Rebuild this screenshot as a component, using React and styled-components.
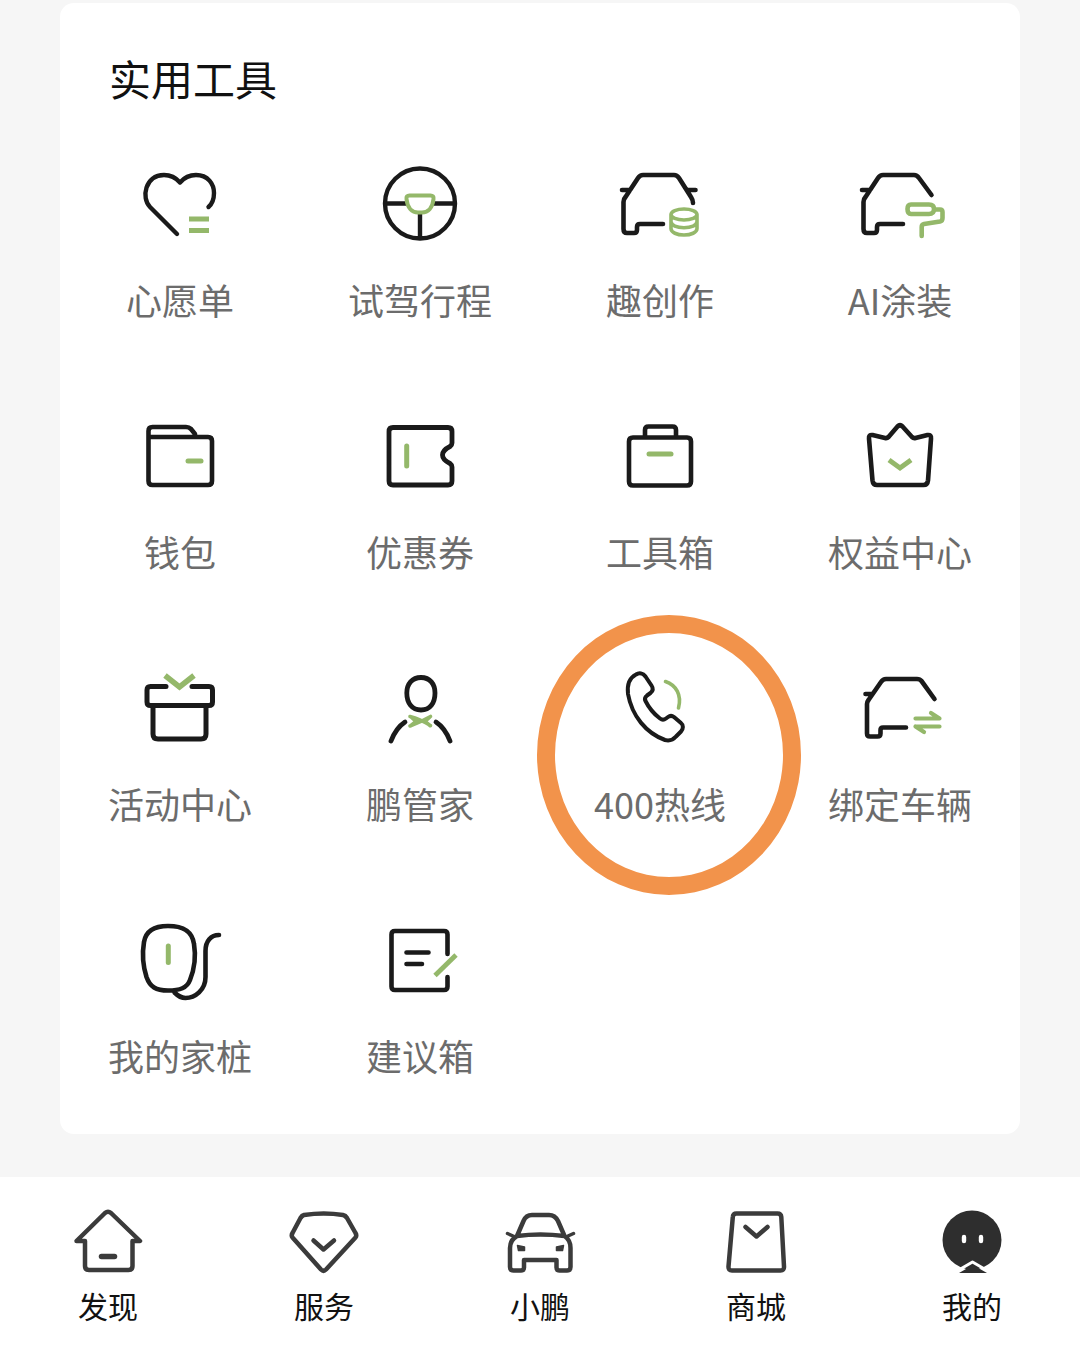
import React from "react";
import styled, { createGlobalStyle } from "styled-components";

const CJK = `"Noto Sans CJK SC", "Noto Sans", sans-serif`;

const GlobalStyle = createGlobalStyle`
  html, body {
    margin: 0;
    padding: 0;
    background: #f6f6f6;
    font-family: ${CJK};
  }
`;

const Page = styled.div`
  width: 1080px;
  height: 1363px;
  display: flex;
  flex-direction: column;
  overflow: hidden;
`;
const Card = styled.section`
  margin: 3px 60px 0;
  padding: 47px 0 52px;
  background: #fff;
  border-radius: 14px;
`;
const Title = styled.h2`
  margin: 0 0 48px 49px;
  font-size: 42px;
  line-height: 56px;
  font-weight: 400;
  color: #111;
`;
const ToolGrid = styled.div`
  display: grid;
  grid-template-columns: repeat(4, 240px);
  row-gap: 80px;
`;
const Tool = styled.div`
  position: relative;
  display: flex;
  flex-direction: column;
  align-items: center;
`;
const ToolLabel = styled.span`
  margin: 20px 0 2px;
  font-size: 36px;
  line-height: 50px;
  color: #6c6c6c;
  white-space: nowrap;
`;
const HighlightRing = styled.div`
  position: absolute;
  left: -3px;
  top: -43px;
  width: 264px;
  height: 280px;
  box-sizing: border-box;
  border: 18px solid #f2934b;
  border-radius: 50%;
`;
const TabBar = styled.nav`
  margin-top: 43px;
  flex: 1;
  padding-top: 23px;
  background: #fff;
  display: grid;
  grid-template-columns: repeat(5, 216px);
  align-content: start;
`;
const Tab = styled.div`
  display: flex;
  flex-direction: column;
  align-items: center;
`;
const TabLabel = styled.span`
  margin-top: 5px;
  font-size: 30px;
  line-height: 40px;
  color: #111;
`;
const ToolSvg = styled.svg.attrs({ viewBox: "0 0 100 100" })`
  display: block;
  width: 100px;
  height: 100px;
  fill: none;
  stroke-linecap: round;
  stroke-linejoin: round;
`;
const TabSvg = styled.svg.attrs({ viewBox: "0 0 80 80" })`
  display: block;
  width: 80px;
  height: 80px;
  fill: none;
  stroke: #3b3b3b;
  stroke-width: 4.5;
  stroke-linecap: round;
  stroke-linejoin: round;
`;
const Ink = styled.path`
  stroke: #1a1a1a;
  stroke-width: ${(p) => p.$w || 4.4};
`;
const Leaf = styled.path`
  stroke: #94b86a;
  stroke-width: ${(p) => p.$w || 5};
`;

const CAR_LEFT = "M53 70 H30 Q27 70 27 73 V76 Q27 79 24 79 H17 Q13.5 79 13.5 75 V48 Q13.5 45 15.5 43 L28 24 Q30 21 33 21 H64 Q67 21 69 24";

const toolIcons = {
  wish: (
    <ToolSvg>
      <Ink d="M47 80 L20 53 C11 44 15 21 34 21 C42 21 47 25 50 28.5 C53 25 58 21 66 21 C78 21 84 30 84 39 C84 45 82 50 78.5 53" />
      <Leaf d="M59 65 H79 M59 76.5 H79" style={{ strokeLinecap: "butt" }} />
    </ToolSvg>
  ),
  drive: (
    <ToolSvg>
      <Ink d="M15 49.5 A35 35 0 1 0 85 49.5 A35 35 0 1 0 15 49.5 M15 49.5 H36 M64 49.5 H85 M50 60 V84" />
      <Leaf $w={4} d="M39.5 41.5 H60.5 Q64 41.5 63.5 45 C62.5 54 58 58.5 52 58.5 H48 C42 58.5 37.5 54 36.5 45 Q36 41.5 39.5 41.5 Z" />
    </ToolSvg>
  ),
  create: (
    <ToolSvg>
      <Ink $w={4.6} d={`${CAR_LEFT} L81 43 Q83 46 83 49 M12 36 H20 M78 36 H85.5`} />
      <Leaf $w={3.6} d="M61 60.5 A13 5.5 0 1 0 87 60.5 A13 5.5 0 1 0 61 60.5 V74.5 C61 78.5 67 81 74 81 C81 81 87 78.5 87 74.5 V60.5 M61 67.5 C61 71.5 67 73.8 74 73.8 C81 73.8 87 71.5 87 67.5" />
    </ToolSvg>
  ),
  paint: (
    <ToolSvg>
      <Ink $w={4.6} d={`${CAR_LEFT} L81.5 41 M12 36 H20`} />
      <Leaf $w={4.6} d="M61 50.5 H79 Q84 50.5 84 55 Q84 60 79 60 H61 Q57.5 60 57.5 55 Q57.5 50.5 61 50.5 Z M84 55.5 H90 Q92.5 55.5 92.5 58 V64 Q92.5 67 90 67.5 L74 70 Q71.7 70.5 71.7 73 V82" />
    </ToolSvg>
  ),
  wallet: (
    <ToolSvg>
      <Ink $w={4.6} d="M18.5 31 H78 Q82 31 82 35 V75 Q82 79 78 79 H22.5 Q18.5 79 18.5 75 V25 Q18.5 21 22.5 21 H56 Q59 21 61 23 L65 28" />
      <Leaf d="M58 55 H71" />
    </ToolSvg>
  ),
  coupon: (
    <ToolSvg>
      <Ink $w={4.8} d="M23 21.5 H78 Q82 21.5 82 25.5 V37 Q82 39 80 40.5 C75 43 72.5 45.5 72.5 49 C72.5 52.5 75 55 80 57.5 Q82 59 82 61 V75 Q82 79 78 79 H23 Q19 79 19 75 V25.5 Q19 21.5 23 21.5 Z" />
      <Leaf d="M36.7 40 V60" />
    </ToolSvg>
  ),
  toolbox: (
    <ToolSvg>
      <Ink $w={4.6} d="M23 31.5 H77 Q81 31.5 81 35.5 V75.5 Q81 79.5 77 79.5 H23 Q19 79.5 19 75.5 V35.5 Q19 31.5 23 31.5 Z M35 31 V24 Q35 20.5 38.5 20.5 H62.5 Q66 20.5 66 24 V31" />
      <Leaf d="M39 48 H61" />
    </ToolSvg>
  ),
  rights: (
    <ToolSvg>
      <Ink $w={4.6} d="M47.5 20.5 Q50 18 52.5 20.5 L62 31 Q63.5 32.5 65.5 32 L77.5 29 Q81.5 28.5 81 32.5 L78 74.5 Q77.5 79 73.5 79 H27 Q23 79 22.5 74.5 L19 32.5 Q18.5 28.5 22.5 29 L35 32 Q37 32.5 38.5 31 Z" />
      <Leaf d="M39 54 L50 62 L61 54" style={{ strokeLinecap: "butt", strokeLinejoin: "miter" }} />
    </ToolSvg>
  ),
  event: (
    <ToolSvg>
      <Ink $w={5} d="M36 28.5 H20.5 Q17 28.5 17 32 V44 Q17 47.5 20.5 47.5 H79 Q82.5 47.5 82.5 44 V32 Q82.5 28.5 79 28.5 H62 M23 48 V76 Q23 81 28 81 H71 Q76 81 76 76 V48" />
      <Leaf $w={5.5} d="M35 17.5 L49.5 29 L64 17.5" style={{ strokeLinecap: "butt", strokeLinejoin: "miter" }} />
    </ToolSvg>
  ),
  butler: (
    <ToolSvg>
      <Ink $w={4.8} d="M51 19.5 C60 19.5 65 26 65 35 C65 45 60 52 51 52 C42 52 36.8 45 36.8 35 C36.8 26 42 19.5 51 19.5 Z M21 83 C24 75 29 68 35 64 M66 64 C72 68 77 75 80 83" />
      <Leaf $w={3.6} d="M40 58.5 Q50 61 60.5 67.5 M40 68 Q50 64.5 60.5 58.5 M41 59 L46 63.5 L41 67.5 M60 59 L55 63.5 L60 67.5" />
    </ToolSvg>
  ),
  hotline: (
    <ToolSvg>
      <Ink $w={4} d="M26 16.5 C29 14.5 33 15 35.5 18.5 L41.5 27.5 C43.5 30.5 43 33 40.5 35 L37 37.5 C35 39 34.5 41 35.5 43 C39 50 44 56 50 60.5 C52 62 54 62 56 60.5 L58 59 C60 57.5 62 57.5 64 59 L71 65 C73.5 67 73.5 71 71 73.5 L66 78.5 C63 82 59 83 55 82 C36 75 22 58 18 36 C17 27 19 20 26 16.5 Z" />
      <Leaf $w={3.6} d="M55.5 23.5 C66 27 72 37 68.5 50" />
    </ToolSvg>
  ),
  bind: (
    <ToolSvg>
      <Ink $w={4.6} d="M56 69.5 H33 Q30.5 69.5 30.5 72 V75.5 Q30.5 78.5 27.5 78.5 H20 Q17 78.5 17 75.5 V46 Q17 44 18.5 42 L31 24 Q33 21 36 21 H67 Q70 21 71.5 23 L84.5 41 M15.5 36 H21" />
      <Leaf $w={4.2} d="M65.5 60.5 H89.5 L81 55 M65.5 68.5 H89.5 M65.5 68.5 L74 74" />
    </ToolSvg>
  ),
  charger: (
    <ToolSvg>
      <Ink $w={4.6} d="M38 16 C52 16 62 20 64 34 C66 46 64 60 60 70 C57 78 50 80.5 38 80.5 C26 80.5 20 77 16.5 67 C13 56 12 44 14 32 C16 20 26 16 38 16 Z M89 25 C81 25 75.5 31 75.5 41 V67 C75.5 80 65 88 55.5 88 C51 88 47 85 44.5 82.5" />
      <Leaf d="M38.3 36 V52.5" />
    </ToolSvg>
  ),
  note: (
    <ToolSvg>
      <Ink $w={4.6} d="M77.5 44 V24.5 Q77.5 21 74 21 H25 Q21.5 21 21.5 24.5 V76.5 Q21.5 80 25 80 H74 Q77.5 80 77.5 76.5 V67 M36.5 42.5 H58.5 M36.5 54 H52" />
      <Leaf $w={4.8} d="M65 65.5 L86 45" style={{ strokeLinecap: "butt" }} />
    </ToolSvg>
  ),
};

const tools = [
  { key: "wish", label: "心愿单" },
  { key: "drive", label: "试驾行程" },
  { key: "create", label: "趣创作" },
  { key: "paint", label: "AI涂装" },
  { key: "wallet", label: "钱包" },
  { key: "coupon", label: "优惠券" },
  { key: "toolbox", label: "工具箱" },
  { key: "rights", label: "权益中心" },
  { key: "event", label: "活动中心" },
  { key: "butler", label: "鹏管家" },
  { key: "hotline", label: "400热线", ring: true },
  { key: "bind", label: "绑定车辆" },
  { key: "charger", label: "我的家桩" },
  { key: "note", label: "建议箱" },
];

const tabs = [
  {
    label: "发现",
    icon: (
      <TabSvg>
        <path d="M17 41 H8.5 L37 13 Q40 10.5 43 13 L72 41 H64.5 V66 Q64.5 70 60.5 70 H21 Q17 70 17 66 Z" />
        <path d="M33.5 56.5 H46.5" strokeWidth="5.5" />
      </TabSvg>
    ),
  },
  {
    label: "服务",
    icon: (
      <TabSvg>
        <path d="M20 15 Q40 12 59 15 Q61.5 15.5 63 18 L71.5 33 Q73 35.5 71.5 37.5 L42 69.5 Q39.5 72 37 69.5 L8.5 37.5 Q7 35.5 8.5 33 L16.5 18 Q18 15.5 20 15 Z" />
        <path d="M29.5 40.5 L39.5 49.5 L50 40.5" />
      </TabSvg>
    ),
  },
  {
    label: "小鹏",
    icon: (
      <TabSvg>
        <path d="M17 36 L23.5 21 Q26 15 32 15 H49 Q55 15 58 21 L64.5 36 M17 36 Q10 40 10 48 V67 Q10 70.5 13.5 70.5 H21 Q24 70.5 24 67.5 V60 H56.5 V67.5 Q56.5 70.5 59.5 70.5 H67 Q70.5 70.5 70.5 67 V48 Q70.5 40 64.5 36 Q40 33 17 36 Z" />
        <path d="M7.5 33.5 L13 36 M73.5 33.5 L68 36" strokeWidth="3.5" />
        <path d="M17.5 45.5 L24.5 47 V50.5 H18.5 Z M63.5 45.5 L56.5 47 V50.5 H62.5 Z" fill="#3b3b3b" strokeWidth="1.5" />
      </TabSvg>
    ),
  },
  {
    label: "商城",
    icon: (
      <TabSvg>
        <path d="M20.5 13.5 H61.5 Q65 13.5 65.3 17 L68 66.5 Q68.3 70.5 64.5 70.5 H16 Q12.2 70.5 12.5 66.5 L16.8 17 Q17 13.5 20.5 13.5 Z" />
        <path d="M29.5 27 L40.5 36.5 L51.5 27" />
      </TabSvg>
    ),
  },
  {
    label: "我的",
    icon: (
      <TabSvg>
        <circle cx="40" cy="40" r="29.5" fill="#2e2e2e" stroke="none" />
        <path d="M27 73 L41 65 L55 73 Z" fill="#2e2e2e" stroke="none" />
        <path d="M25 71 L40.5 62 L56 71" stroke="#fff" strokeWidth="3" strokeLinecap="butt" />
        <path d="M32 37 V41 M49 37 V41" stroke="#fff" strokeWidth="4.4" />
      </TabSvg>
    ),
  },
];

export default function App() {
  return (
    <>
      <GlobalStyle />
      <Page>
        <Card>
          <Title>实用工具</Title>
          <ToolGrid>
            {tools.map((tool) => (
              <Tool key={tool.key}>
                {toolIcons[tool.key]}
                <ToolLabel>{tool.label}</ToolLabel>
                {tool.ring && <HighlightRing />}
              </Tool>
            ))}
          </ToolGrid>
        </Card>
        <TabBar>
          {tabs.map((tab) => (
            <Tab key={tab.label}>
              {tab.icon}
              <TabLabel>{tab.label}</TabLabel>
            </Tab>
          ))}
        </TabBar>
      </Page>
    </>
  );
}
